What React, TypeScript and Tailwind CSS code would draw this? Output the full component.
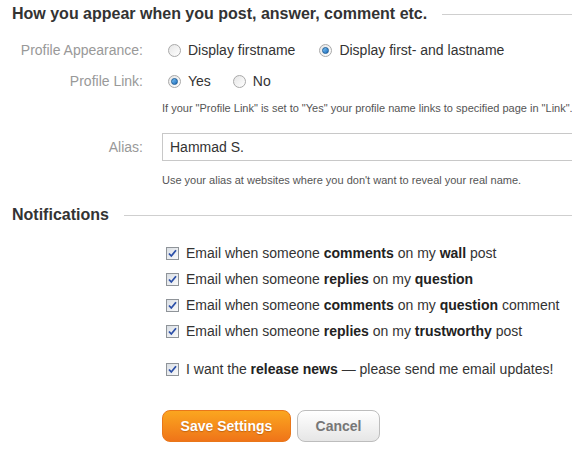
import React from 'react'

const font = { fontFamily: '"Liberation Sans", Arial, sans-serif' }

function Radio({ checked }: { checked?: boolean }) {
  return (
    <span className="relative inline-flex h-[13px] w-[13px] shrink-0 items-center justify-center rounded-full border border-[#a9a9a9] bg-gradient-to-br from-[#e6e6e6] to-[#ffffff]">
      {checked && (
        <span className="h-[7px] w-[7px] rounded-full border border-[#1d5d97] bg-gradient-to-br from-[#7cc4f4] to-[#1a6cbc]" />
      )}
    </span>
  )
}

function Checkbox() {
  return (
    <svg width="13" height="13" viewBox="0 0 13 13" className="shrink-0">
      <defs>
        <linearGradient id="cb" x1="0" y1="0" x2="1" y2="1">
          <stop offset="0" stopColor="#d8dde3" />
          <stop offset="1" stopColor="#fbfbfb" />
        </linearGradient>
      </defs>
      <rect x="0.5" y="0.5" width="12" height="12" fill="url(#cb)" stroke="#8f9499" />
      <path d="M3 6.5 L5.3 9 L10 3.3" fill="none" stroke="#2b4fa8" strokeWidth="1.8" />
    </svg>
  )
}

function SectionHeading({ title }: { title: string }) {
  return (
    <div className="flex h-[28px] items-center gap-[15px] pl-3">
      <h2 className="text-[16px] font-bold text-[#333]">{title}</h2>
      <div className="h-px flex-1 bg-[#cfcfcf]" />
    </div>
  )
}

function Row({ label, children, className = '' }: { label?: string; children: React.ReactNode; className?: string }) {
  return (
    <div className={`flex items-center ${className}`}>
      <div className="w-[143px] shrink-0 text-right text-[14px] text-[#999]">{label}</div>
      <div className="ml-[19px] flex min-w-0 flex-1 items-center">{children}</div>
    </div>
  )
}

const notifications: React.ReactNode[] = [
  <>Email when someone <b>comments</b> on my <b>wall</b> post</>,
  <>Email when someone <b>replies</b> on my <b>question</b></>,
  <>Email when someone <b>comments</b> on my <b>question</b> comment</>,
  <>Email when someone <b>replies</b> on my <b>trustworthy</b> post</>,
]

export default function App() {
  return (
    <div className="h-[456px] w-[572px] overflow-hidden bg-white text-[#333]" style={font}>
      <SectionHeading title="How you appear when you post, answer, comment etc." />

      <Row label="Profile Appearance:" className="mt-2 h-[28px]">
        <span className="ml-[6px] flex items-center gap-[7px] text-[14px]">
          <Radio /> Display firstname
        </span>
        <span className="ml-6 flex items-center gap-[7px] text-[14px]">
          <Radio checked /> Display first- and lastname
        </span>
      </Row>

      <Row label="Profile Link:" className="mt-[3px] h-[28px]">
        <span className="ml-[6px] flex items-center gap-[7px] text-[14px]">
          <Radio checked /> Yes
        </span>
        <span className="ml-[22px] flex items-center gap-[7px] text-[14px]">
          <Radio /> No
        </span>
      </Row>

      <Row className="mt-[5px] h-[16px]">
        <p className="whitespace-nowrap text-[11px] text-[#555]">
          If your "Profile Link" is set to "Yes" your profile name links to specified page in "Link".
        </p>
      </Row>

      <Row label="Alias:" className="mt-[17px] h-[28px]">
        <div className="flex h-[28px] flex-1 items-center border border-r-0 border-[#c8c8c8] pl-[7px] text-[14px] text-[#333]">
          Hammad S.
        </div>
      </Row>

      <Row className="mt-[11px] h-[16px]">
        <p className="whitespace-nowrap text-[11px] text-[#555]">
          Use your alias at websites where you don't want to reveal your real name.
        </p>
      </Row>

      <div className="mt-[13px]">
        <SectionHeading title="Notifications" />
      </div>

      <div className="mt-[11px] pl-[166px]">
        {notifications.map((n, i) => (
          <div key={i} className="flex h-[26px] items-center gap-[7px] whitespace-nowrap text-[14px] text-[#333]">
            <Checkbox />
            <span className="[&_b]:text-[#222]">{n}</span>
          </div>
        ))}
        <div className="mt-[12px] flex h-[26px] items-center gap-[7px] whitespace-nowrap text-[14px] text-[#333]">
          <Checkbox />
          <span>
            I want the <b className="text-[#222]">release news</b> — please send me email updates!
          </span>
        </div>
      </div>

      <div className="ml-[162px] mt-[28px] flex gap-[6px]">
        <button className="h-[32px] w-[129px] rounded-[8px] border border-[#e9771a] bg-gradient-to-b from-[#fba61f] to-[#ef7419] text-[14px] font-bold text-white [text-shadow:0_1px_1px_rgba(150,70,0,0.5)]">
          Save Settings
        </button>
        <button className="h-[32px] w-[83px] rounded-[8px] border border-[#bdbdbd] bg-gradient-to-b from-[#ffffff] to-[#e6e6e6] text-[14px] font-bold text-[#777]">
          Cancel
        </button>
      </div>
    </div>
  )
}
